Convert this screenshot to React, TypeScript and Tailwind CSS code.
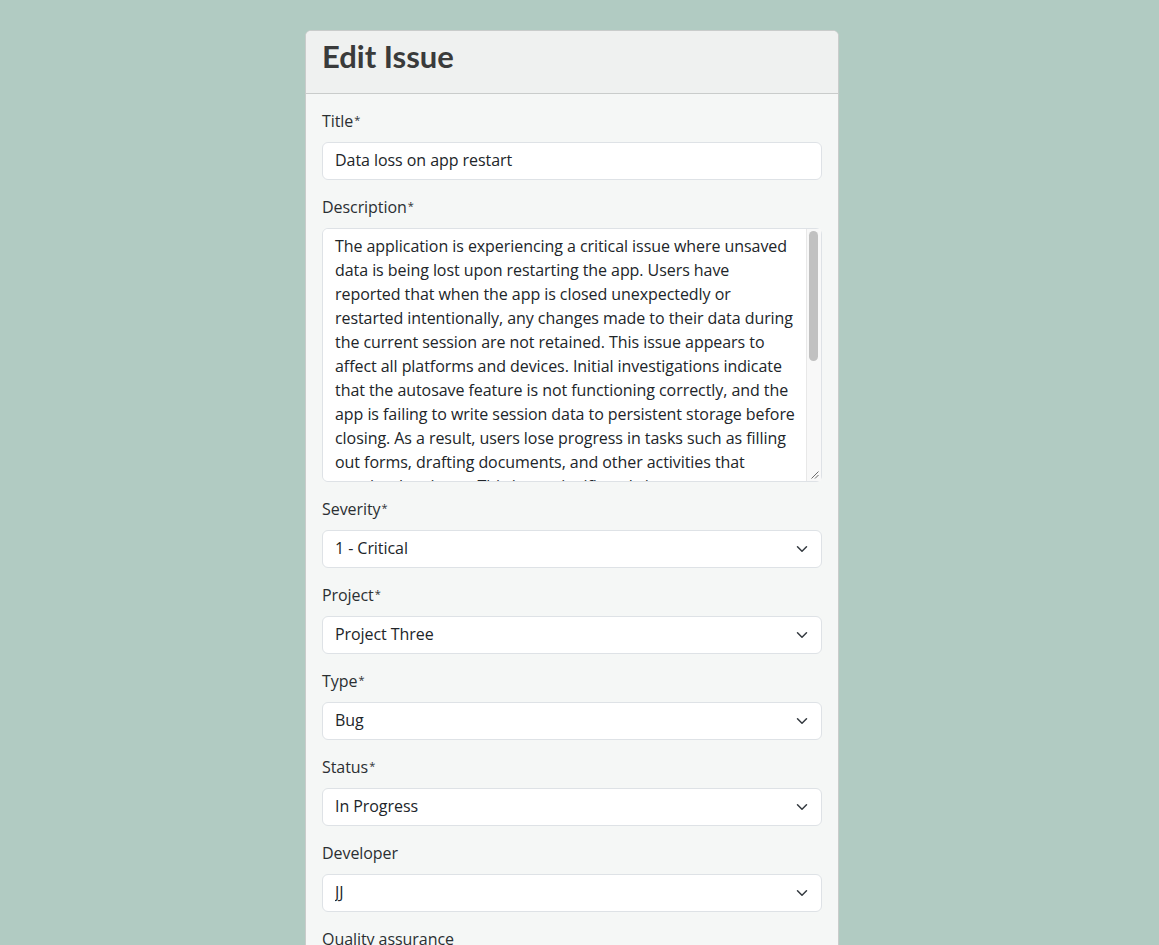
import React from "react";

const description = [
  "The application is experiencing a critical issue where unsaved",
  "data is being lost upon restarting the app. Users have",
  "reported that when the app is closed unexpectedly or",
  "restarted intentionally, any changes made to their data during",
  "the current session are not retained. This issue appears to",
  "affect all platforms and devices. Initial investigations indicate",
  "that the autosave feature is not functioning correctly, and the",
  "app is failing to write session data to persistent storage before",
  "closing. As a result, users lose progress in tasks such as filling",
  "out forms, drafting documents, and other activities that",
  "require data input. This issue significantly impacts user",
  "productivity and trust in the application. Steps to reproduce:",
  "1. Open the app and start editing any record.",
  "2. Make several changes without saving manually.",
  "3. Close or restart the application.",
  "4. Reopen the app and observe that the changes are missing.",
  "Expected behaviour: changes should be restored automatically",
  "from the last autosave. This needs to be addressed with the",
  "highest priority.",
].join("\n");

function Label({ children, required }: { children: React.ReactNode; required?: boolean }) {
  return (
    <label className="block mb-[10px] text-[16px] leading-[22px] text-[#2b2f32]">
      {children}
      {required && <span className="text-[11px] align-top relative -top-[1px] ml-[1px]">*</span>}
    </label>
  );
}

function Chevron() {
  return (
    <svg
      className="pointer-events-none absolute right-[12px] top-1/2 -translate-y-1/2"
      width="16"
      height="12"
      viewBox="0 0 16 16"
      fill="none"
      stroke="#343a40"
      strokeWidth="2"
      strokeLinecap="round"
      strokeLinejoin="round"
    >
      <path d="m2 5 6 6 6-6" />
    </svg>
  );
}

function Select({ value, options }: { value: string; options: string[] }) {
  return (
    <div className="relative">
      <select
        defaultValue={value}
        className="block w-full h-[38px] appearance-none rounded-[6px] border border-[#dee2e6] bg-white pl-3 pr-9 pt-[5px] pb-[7px] text-[16px] leading-[24px] text-[#212529] outline-none"
      >
        {options.map((o) => (
          <option key={o} value={o}>
            {o}
          </option>
        ))}
      </select>
      <Chevron />
    </div>
  );
}

function Group({ label, required, children }: { label: string; required?: boolean; children: React.ReactNode }) {
  return (
    <div className="mb-4">
      <Label required={required}>{label}</Label>
      {children}
    </div>
  );
}

function FakeScrollbar() {
  return (
    <div className="pointer-events-none absolute right-[1px] top-[1px] bottom-[1px] flex w-[15px] flex-col">
      <div className="relative flex-1 border-l border-[#e8e8e8] bg-[#f8f8f8]">
        <div className="absolute left-[2px] top-[2px] h-[130px] w-[9px] rounded-full bg-[#c1c1c1]" />
      </div>
      <div className="flex h-[15px] items-end justify-end border-l border-[#e8e8e8] bg-[#f8f8f8] p-[2px]">
        <svg width="9" height="9" viewBox="0 0 9 9" stroke="#6b6b6b" strokeWidth="1">
          <path d="M8.5 1.5 1.5 8.5" />
          <path d="M8.5 5 5 8.5" />
        </svg>
      </div>
    </div>
  );
}

export default function App() {
  return (
    <div
      className="min-h-screen bg-[#b1cbc2] pt-[30px] pb-10 pr-[15px]"
      style={{ fontFamily: '"Open Sans", "Noto Sans", sans-serif' }}
    >
      <div className="mx-auto w-[534px] rounded-[6px] border border-[#c9cccb] bg-[#f5f7f6] overflow-hidden">
        <div className="border-b border-[#c9cccb] bg-[#eff1f0] px-4 pt-[6px] pb-[10px]">
          <h2
            className="mb-2 text-[31px] leading-[38px] font-bold text-[#3a3b3b]"
            style={{ fontFamily: 'Lato, "Open Sans", sans-serif' }}
          >
            Edit Issue
          </h2>
        </div>
        <form className="p-4 tracking-[-0.06px]">
          <Group label="Title" required>
            <input
              type="text"
              defaultValue="Data loss on app restart"
              className="block w-full h-[38px] rounded-[6px] border border-[#dee2e6] bg-white px-3 pt-[5px] pb-[7px] text-[16px] leading-[24px] text-[#212529] outline-none"
            />
          </Group>
          <Group label="Description" required>
            <div className="relative">
              <textarea
                defaultValue={description}
                wrap="off"
                className="block w-full h-[254px] resize-none overflow-y-scroll overflow-x-hidden whitespace-pre rounded-[6px] border border-[#dee2e6] bg-white pl-3 pr-[27px] pt-[5px] pb-1.5 text-[16px] leading-[24px] text-[#212529] outline-none"
              />
              <FakeScrollbar />
            </div>
          </Group>
          <Group label="Severity" required>
            <Select value="1 - Critical" options={["1 - Critical", "2 - High", "3 - Medium", "4 - Low"]} />
          </Group>
          <Group label="Project" required>
            <Select value="Project Three" options={["Project One", "Project Two", "Project Three"]} />
          </Group>
          <Group label="Type" required>
            <Select value="Bug" options={["Bug", "Feature", "Task"]} />
          </Group>
          <Group label="Status" required>
            <Select value="In Progress" options={["Open", "In Progress", "Resolved", "Closed"]} />
          </Group>
          <Group label="Developer">
            <Select value="JJ" options={["JJ", "AB", "CD"]} />
          </Group>
          <Group label="Quality assurance">
            <Select value="AB" options={["AB", "JJ", "CD"]} />
          </Group>
          <div className="flex gap-2 pt-2">
            <button type="button" className="rounded-[6px] bg-[#0d6efd] px-3 py-1.5 text-[16px] text-white">
              Save
            </button>
            <button type="button" className="rounded-[6px] bg-[#6c757d] px-3 py-1.5 text-[16px] text-white">
              Cancel
            </button>
          </div>
        </form>
      </div>
    </div>
  );
}
